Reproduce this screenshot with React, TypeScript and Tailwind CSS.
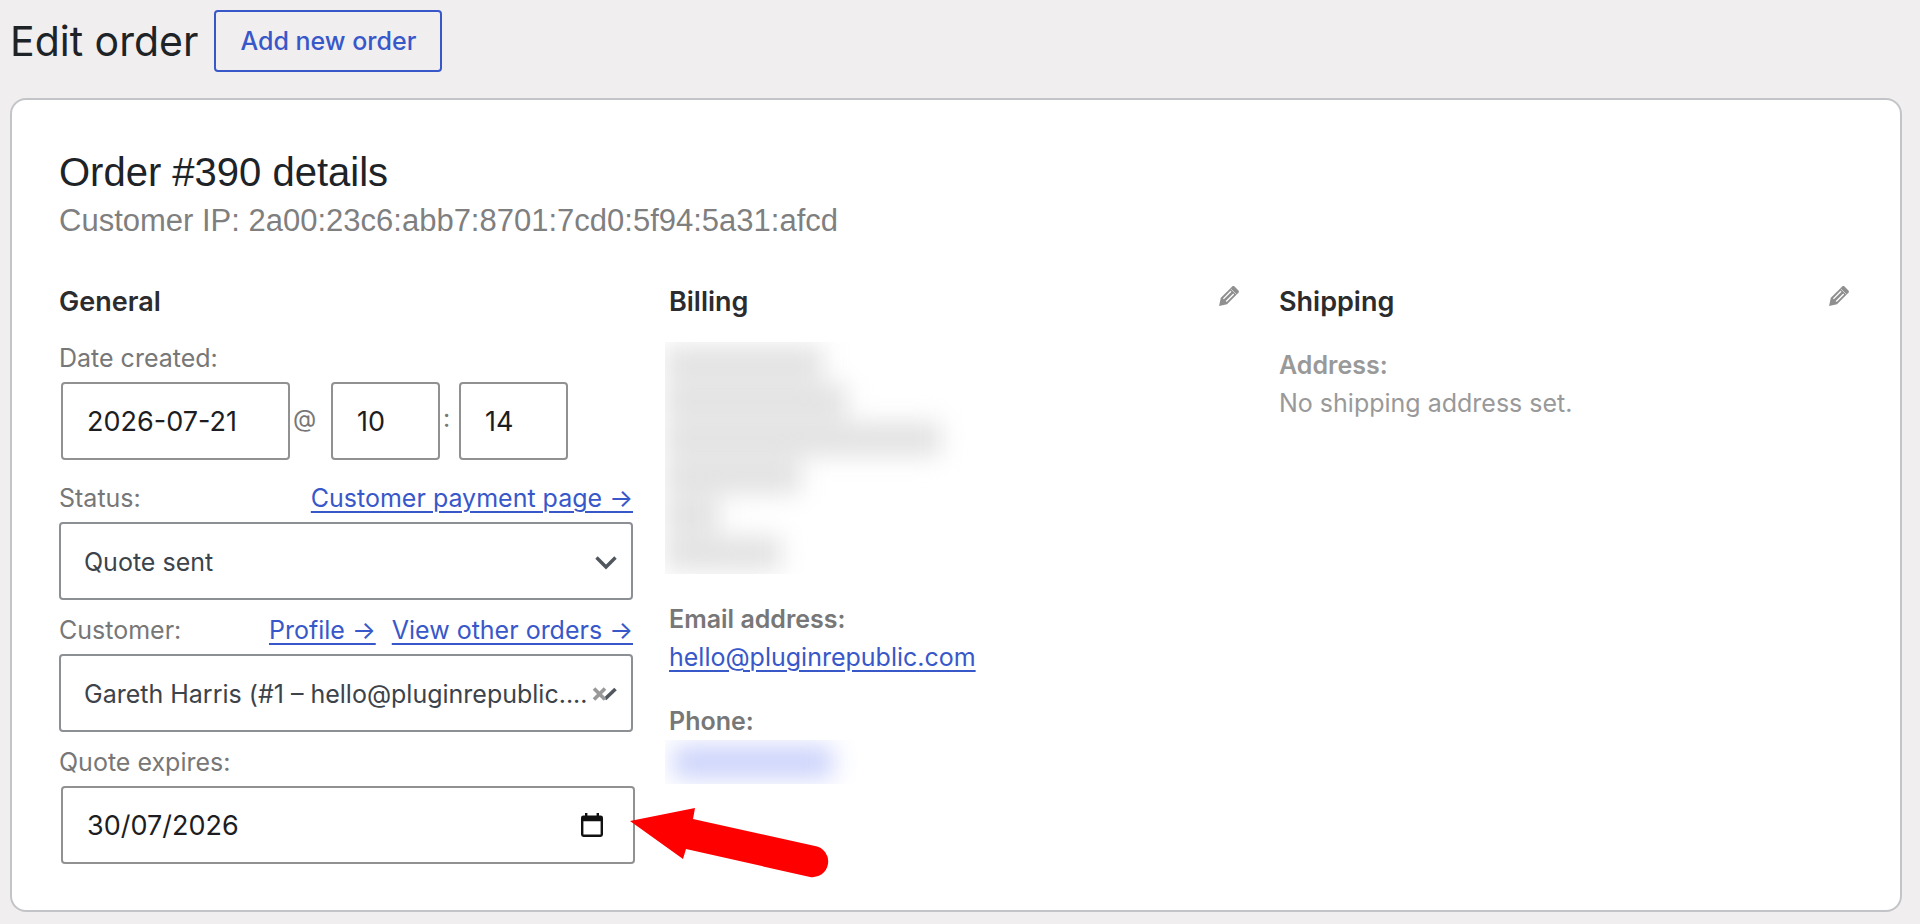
import React from 'react';

const inputClass =
  'h-[78px] rounded-[4px] border-2 border-[#919191] bg-white px-6 text-[27px] text-[#1d1d1f] outline-none';
const selectClass =
  'h-[78px] w-full appearance-none rounded-[4px] border-2 border-[#8c8f94] bg-white pt-1 pl-[23px] text-[25px] text-[#3c434a] outline-none';
const headingClass = 'text-[27px] leading-10 font-semibold text-[#2c2c2e]';
const linkClass = 'text-[#3858c9] underline decoration-2 underline-offset-4';

const addressLines = [
  { id: 'name', width: 'w-[158px]' },
  { id: 'company', width: 'w-[182px]' },
  { id: 'street', width: 'w-[276px]' },
  { id: 'city', width: 'w-[136px]' },
  { id: 'county', width: 'w-[54px]' },
  { id: 'postcode', width: 'w-[116px]' },
];

const EditButton: React.FC<{ label: string }> = ({ label }) => (
  <button type="button" aria-label={label} className="mr-1 mb-3 text-[#8f8f8f]">
    <svg viewBox="3 3 14 14" className="size-5" fill="currentColor">
      <path d="M13.89 3.39l2.71 2.72c.46.46.42 1.24.03 1.64l-8.01 8.02-5.56 1.16 1.16-5.58s7.6-7.63 7.99-8.03c.39-.39 1.22-.39 1.68.07z" />
      <path d="M6.100 12 11.400 6.700M8 13.900 13.300 8.600" stroke="#fff" strokeWidth="0.900" />
      <path d="M11.200 4.900 15.100 8.800" stroke="#fff" strokeWidth="0.400" />
    </svg>
  </button>
);

const Chevron: React.FC = () => (
  <svg viewBox="0 0 22 14" className="h-[14px] w-[22px]" fill="none" stroke="#50575e" strokeWidth="3.4">
    <path d="M1.5 1.5 11 11 20.5 1.5" />
  </svg>
);

const General: React.FC = () => (
  <div>
    <h3 className={headingClass}>General</h3>
    <div className="flex h-[60px] items-end pb-1">
      <label htmlFor="date" className="leading-10">Date created:</label>
    </div>
    <div className="flex items-center pl-0.5">
      <input id="date" className={`${inputClass} w-[229px]`} defaultValue="2026-07-21" />
      <span className="w-[41px] pb-1 pl-[3px] text-[24px]">@</span>
      <input aria-label="Hour" className={`${inputClass} w-[109px]`} defaultValue="10" />
      <span className="w-[19px] pb-1 pl-[3px]">:</span>
      <input aria-label="Minute" className={`${inputClass} w-[109px]`} defaultValue="14" />
    </div>

    <div className="mt-2 flex h-[54px] items-end justify-between pb-1">
      <label htmlFor="status" className="leading-10">Status:</label>
      <a href="#" className={`${linkClass} leading-10`}>Customer payment page →</a>
    </div>
    <div className="relative">
      <select id="status" className={selectClass}>
        <option>Quote sent</option>
      </select>
      <span className="pointer-events-none absolute inset-y-0 right-4 flex items-center pt-1">
        <Chevron />
      </span>
    </div>

    <div className="flex h-[54px] items-end pb-1">
      <label htmlFor="customer" className="mr-auto leading-10">Customer:</label>
      <a href="#" className={`${linkClass} leading-10`}>Profile →</a>
      <a href="#" className={`${linkClass} ml-4 leading-10`}>View other orders →</a>
    </div>
    <div className="relative">
      <select id="customer" className={selectClass}>
        <option>Gareth Harris (#1 – hello@pluginrepublic....</option>
      </select>
      <span className="pointer-events-none absolute inset-y-0 right-4 flex items-center pt-0.5">
        <svg viewBox="0 0 25 14" className="h-[14px] w-[25px]" fill="none">
          <path d="M13 12 23.5 2" stroke="#50575e" strokeWidth="3.6" />
          <path d="M2 1.5 13 12.5M13 1.5 2 12.5" stroke="#999" strokeWidth="3.6" />
        </svg>
      </span>
    </div>

    <div className="flex h-[54px] items-end pb-1">
      <label htmlFor="expires" className="leading-10">Quote expires:</label>
    </div>
    <div className="relative -mr-0.5 pl-0.5">
      <input id="expires" className={`${inputClass} w-full`} defaultValue="30/07/2026" />
      <button type="button" aria-label="Pick a date" className="absolute inset-y-0 right-8 flex items-center">
        <svg viewBox="0 0 22 24" className="h-6 w-[22px]">
          <path
            fill="#111"
            fillRule="evenodd"
            d="M4 0h2.4v2.4h9.2V0H18v2.4h1.6A2.4 2.4 0 0 1 22 4.800V21.600A2.400 2.400 0 0 1 19.600 24H2.400A2.400 2.400 0 0 1 0 21.600V4.800A2.400 2.400 0 0 1 2.400 2.400H4zM2.400 8.200v13.400h17.200V8.200z"
          />
        </svg>
      </button>
      <svg
        viewBox="0 0 200 72"
        className="pointer-events-none absolute top-[21px] left-full h-[72px] w-[200px] -translate-x-[5px]"
        fill="#fe0000"
      >
        <path d="M0 14 65 1 63 12 185 39A15.500 15.500 0 0 1 180 70L56 42 53 52z" />
      </svg>
    </div>
  </div>
);

const Billing: React.FC = () => (
  <div>
    <div className="flex items-center justify-between">
      <h3 className={headingClass}>Billing</h3>
      <EditButton label="Edit billing address" />
    </div>
    <div className="-ml-1 mt-5 h-[232px] w-80 overflow-hidden">
      <div className="flex flex-col gap-1 pt-1 blur-[12px]">
        {addressLines.map((line) => (
          <div key={line.id} className={`h-[34px] bg-[#e2e2e2] ${line.width}`} />
        ))}
      </div>
    </div>
    <p className="mt-[26px] leading-[38px] font-semibold">Email address:</p>
    <a href="#" className={`${linkClass} block leading-[38px]`}>hello@pluginrepublic.com</a>
    <p className="mt-[26px] leading-[38px] font-semibold">Phone:</p>
    <div className="-ml-1 h-11 w-48 overflow-hidden">
      <div className="mt-1.5 ml-2 h-8 w-[160px] bg-[#cbd2fb] blur-[12px]" />
    </div>
  </div>
);

const Shipping: React.FC = () => (
  <div>
    <div className="flex items-center justify-between">
      <h3 className={headingClass}>Shipping</h3>
      <EditButton label="Edit shipping address" />
    </div>
    <div className="mt-6 leading-[38px] text-[#999]">
      <p className="font-semibold">Address:</p>
      <p>No shipping address set.</p>
    </div>
  </div>
);

const App: React.FC = () => {
  return (
    <main className="min-h-screen bg-[#f1eef0] px-2.5 pt-2.5 pb-3 font-['Inter',sans-serif] text-[25px] text-[#777]">
      <header className="flex items-center gap-4">
        <h1 className="text-[41px] leading-[62px] text-[#1d2327]">Edit order</h1>
        <button
          type="button"
          className="h-[62px] rounded-[4px] border-2 border-[#3858c9] px-6 pt-0.5 text-[25px] font-medium text-[#3858c9]"
        >
          Add new order
        </button>
      </header>

      <section className="mt-[26px] mr-2 rounded-2xl border-2 border-[#c3c4c7] bg-white px-[47px] pt-12 pb-[46px]">
        <h2 className="font-['Liberation_Sans',sans-serif] text-[40px] leading-[48px] text-[#1d2327]">
          Order #390 details
        </h2>
        <p className="font-['Liberation_Sans',sans-serif] text-[31px] leading-[50px] text-[#7f7f7f]">
          Customer IP: 2a00:23c6:abb7:8701:7cd0:5f94:5a31:afcd
        </p>
        <div className="mt-9 grid grid-cols-3 gap-9">
          <General />
          <Billing />
          <Shipping />
        </div>
      </section>
    </main>
  );
};

export default App;
